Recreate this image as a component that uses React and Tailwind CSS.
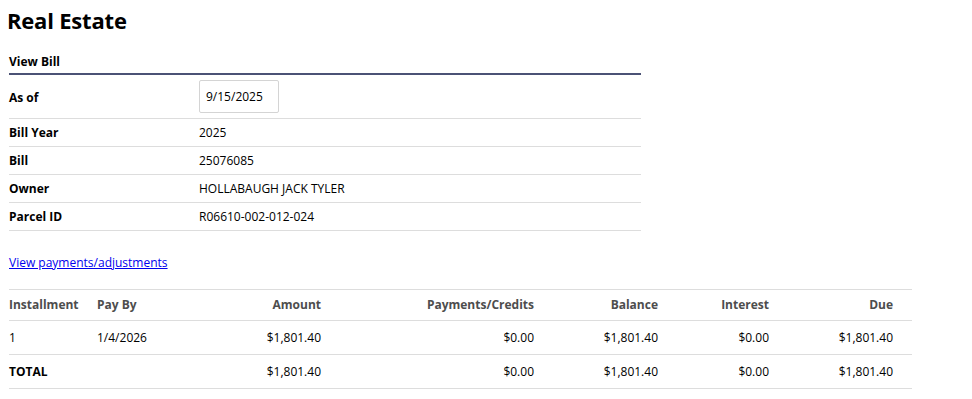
export default function App() {
  const font = { fontFamily: '"Open Sans", "Noto Sans", sans-serif' };
  const rows = [
    ["Bill Year", "2025"],
    ["Bill", "25076085"],
    ["Owner", "HOLLABAUGH JACK TYLER"],
    ["Parcel ID", "R06610-002-012-024"],
  ];
  const cols = "grid grid-cols-[88px_103px_121px_213px_124px_111px_143px]";
  return (
    <div className="bg-white text-black w-[972px] h-[399px] px-[9px]" style={font}>
      <h1 className="text-[22px] font-bold leading-[28px] pt-[6px] -ml-[2px] tracking-[-0.2px]">Real Estate</h1>
      <div className="w-[632px] mt-[18px]">
        <div className="text-[12px] font-bold h-[23px] leading-[16px] pt-[2px] border-b-2 border-[#4b5275]">View Bill</div>
        <div className="flex items-center h-[44px] pt-[3px] border-b border-[#dddddd] text-[12px]">
          <div className="w-[190px] font-bold">As of</div>
          <div className="w-[80px] h-[33px] border border-[#d4d4d4] rounded-[2px] flex items-center pl-[6px] mt-[-3px]">9/15/2025</div>
        </div>
        {rows.map(([k, v]) => (
          <div key={k} className="flex items-center h-[28px] border-b border-[#dddddd] text-[12px]">
            <div className="w-[190px] font-bold">{k}</div>
            <div>{v}</div>
          </div>
        ))}
      </div>
      <div className="h-[58px] pt-[5px] flex items-center text-[12px]">
        <a href="#" className="text-[#0000ee] underline">View payments/adjustments</a>
      </div>
      <div className="w-[903px] text-[12px] border-t border-[#dddddd]">
        <div className={`${cols} h-[31px] items-center border-b border-[#dddddd] font-bold text-[#4d4d4d]`}>
          <div>Installment</div>
          <div>Pay By</div>
          <div className="text-right">Amount</div>
          <div className="text-right">Payments/Credits</div>
          <div className="text-right">Balance</div>
          <div className="text-right">Interest</div>
          <div className="text-right pr-[19px]">Due</div>
        </div>
        <div className={`${cols} h-[34px] items-center border-b border-[#dddddd]`}>
          <div>1</div>
          <div>1/4/2026</div>
          <div className="text-right">$1,801.40</div>
          <div className="text-right">$0.00</div>
          <div className="text-right">$1,801.40</div>
          <div className="text-right">$0.00</div>
          <div className="text-right pr-[19px]">$1,801.40</div>
        </div>
        <div className={`${cols} h-[34px] items-center border-b border-[#dddddd]`}>
          <div className="font-bold">TOTAL</div>
          <div></div>
          <div className="text-right">$1,801.40</div>
          <div className="text-right">$0.00</div>
          <div className="text-right">$1,801.40</div>
          <div className="text-right">$0.00</div>
          <div className="text-right pr-[19px]">$1,801.40</div>
        </div>
      </div>
    </div>
  );
}
